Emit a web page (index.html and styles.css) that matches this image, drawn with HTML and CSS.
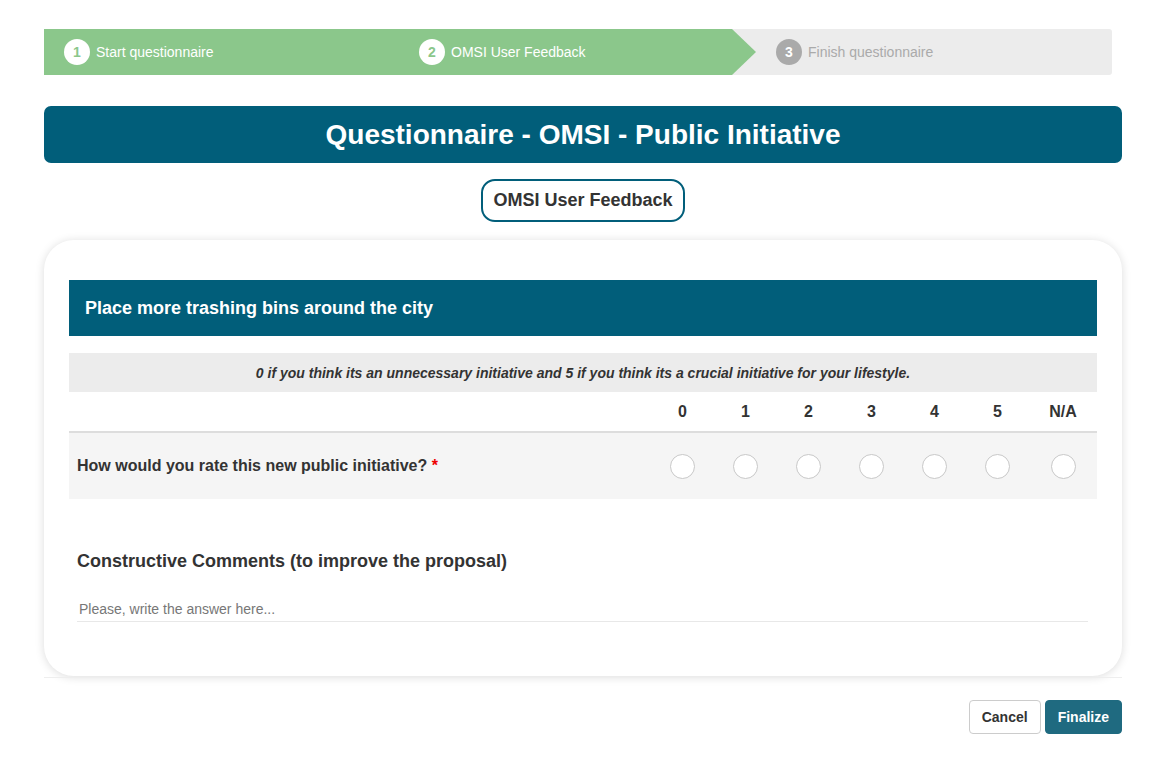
FILE: index.html
```html
<!DOCTYPE html>
<html>
<head>
<meta charset="utf-8">
<link rel="stylesheet" href="styles.css">
</head>
<body>
<div class="page">
  <div class="steps">
    <div class="step done first"><span class="num">1</span><span class="label">Start questionnaire</span></div>
    <div class="step done second"><span class="num">2</span><span class="label">OMSI User Feedback</span></div>
    <div class="step todo"><span class="num">3</span><span class="label">Finish questionnaire</span></div>
  </div>

  <h1 class="title">Questionnaire - OMSI - Public Initiative</h1>

  <div class="pill-wrap"><div class="pill">OMSI User Feedback</div></div>

  <div class="card">
    <div class="q-header">Place more trashing bins around the city</div>
    <div class="hint">0 if you think its an unnecessary initiative and 5 if you think its a crucial initiative for your lifestyle.</div>
    <div class="scale head">
      <div class="cell-label"></div>
      <div class="cell">0</div>
      <div class="cell">1</div>
      <div class="cell">2</div>
      <div class="cell">3</div>
      <div class="cell">4</div>
      <div class="cell">5</div>
      <div class="cell">N/A</div>
    </div>
    <div class="scale row">
      <div class="cell-label">How would you rate this new public initiative? <span class="req">*</span></div>
      <div class="cell"><span class="radio"></span></div>
      <div class="cell"><span class="radio"></span></div>
      <div class="cell"><span class="radio"></span></div>
      <div class="cell"><span class="radio"></span></div>
      <div class="cell"><span class="radio"></span></div>
      <div class="cell"><span class="radio"></span></div>
      <div class="cell"><span class="radio"></span></div>
    </div>

    <div class="comments">
      <div class="comments-label">Constructive Comments (to improve the proposal)</div>
      <div class="answer">Please, write the answer here...</div>
    </div>
  </div>

  <div class="footer">
    <button class="btn cancel">Cancel</button>
    <button class="btn finalize">Finalize</button>
  </div>
</div>
</body>
</html>
```

FILE: styles.css
```css
* { box-sizing: border-box; }
html, body { margin: 0; padding: 0; background: #fff; }
body {
  font-family: "Liberation Sans", Arial, sans-serif;
  color: #333;
}
.page {
  width: 1078px;
  margin-left: 44px;
  padding-top: 29px;
}

/* steps */
.steps {
  display: flex;
  width: 1068px;
  height: 46px;
  background: #ececec;
  border-radius: 0 3px 3px 0;
}
.step {
  display: flex;
  align-items: center;
  height: 46px;
  font-size: 14px;
}
.step.done { background: #8bc78b; color: #fff; }
.step.first { width: 356px; padding-left: 20px; }
.step.second {
  width: 356px;
  padding-left: 19px;
  clip-path: polygon(0 0, calc(100% - 24px) 0, 100% 50%, calc(100% - 24px) 100%, 0 100%);
}
.step.todo { flex: 1; padding-left: 20px; color: #aaa; }
.num {
  width: 26px;
  height: 26px;
  border-radius: 50%;
  display: flex;
  align-items: center;
  justify-content: center;
  font-weight: bold;
  font-size: 14px;
  margin-right: 6px;
}
.done .num { background: #fff; color: #8bc78b; }
.todo .num { background: #aaa; color: #fff; }

/* title */
.title {
  margin: 31px 0 0;
  height: 57px;
  background: #015e7a;
  color: #fff;
  border-radius: 7px;
  font-size: 28px;
  font-weight: bold;
  display: flex;
  align-items: center;
  justify-content: center;
}

.pill-wrap {
  display: flex;
  justify-content: center;
  margin-top: 16px;
}
.pill {
  height: 43px;
  border: 2px solid #015e7a;
  border-radius: 14px;
  padding: 0 10px;
  font-size: 18px;
  font-weight: bold;
  display: flex;
  align-items: center;
}

/* card */
.card {
  margin-top: 18px;
  background: #fff;
  border-radius: 30px;
  box-shadow: 0 1px 10px rgba(0,0,0,0.14);
  padding: 40px 25px 54px;
  height: 436px;
}
.q-header {
  height: 56px;
  background: #015e7a;
  color: #fff;
  font-size: 18px;
  font-weight: bold;
  display: flex;
  align-items: center;
  padding-left: 16px;
}
.hint {
  margin-top: 17px;
  height: 39px;
  background: #ececec;
  font-size: 14px;
  font-weight: bold;
  font-style: italic;
  display: flex;
  align-items: center;
  justify-content: center;
}
.scale {
  display: grid;
  grid-template-columns: 1fr repeat(6, 63px) 68px;
  align-items: center;
}
.scale.head {
  height: 41px;
  border-bottom: 2px solid #ddd;
  font-size: 16px;
  font-weight: bold;
}
.scale.row {
  height: 66px;
  background: #f5f5f5;
}
.cell { text-align: center; display: flex; justify-content: center; }
.scale.head .cell { padding-top: 1px; }
.cell-label {
  padding-left: 8px;
  font-size: 16px;
  font-weight: bold;
}
.req { color: #e00; }
.radio {
  width: 25px;
  height: 25px;
  border-radius: 50%;
  border: 1px solid #c8c8c8;
  background: #fff;
  display: block;
}
.comments {
  padding: 52px 9px 0 8px;
}
.comments-label {
  font-size: 18px;
  font-weight: bold;
}
.answer {
  margin-top: 18px;
  padding: 11px 2px 4px;
  font-size: 14px;
  color: #777;
  border-bottom: 1px solid #e8e8e8;
}

/* footer */
.footer {
  margin-top: 1px;
  border-top: 1px solid #eee;
  display: flex;
  justify-content: flex-end;
  gap: 4px;
  padding-top: 22px;
}
.btn {
  height: 34px;
  font-family: "Liberation Sans", Arial, sans-serif;
  font-size: 14px;
  font-weight: bold;
  border-radius: 4px;
  padding: 0 12px;
  cursor: pointer;
}
.cancel {
  background: #fff;
  border: 1px solid #ccc;
  color: #333;
}
.finalize {
  background: #1f6a80;
  border: 1px solid #1f6a80;
  color: #fff;
}
```
